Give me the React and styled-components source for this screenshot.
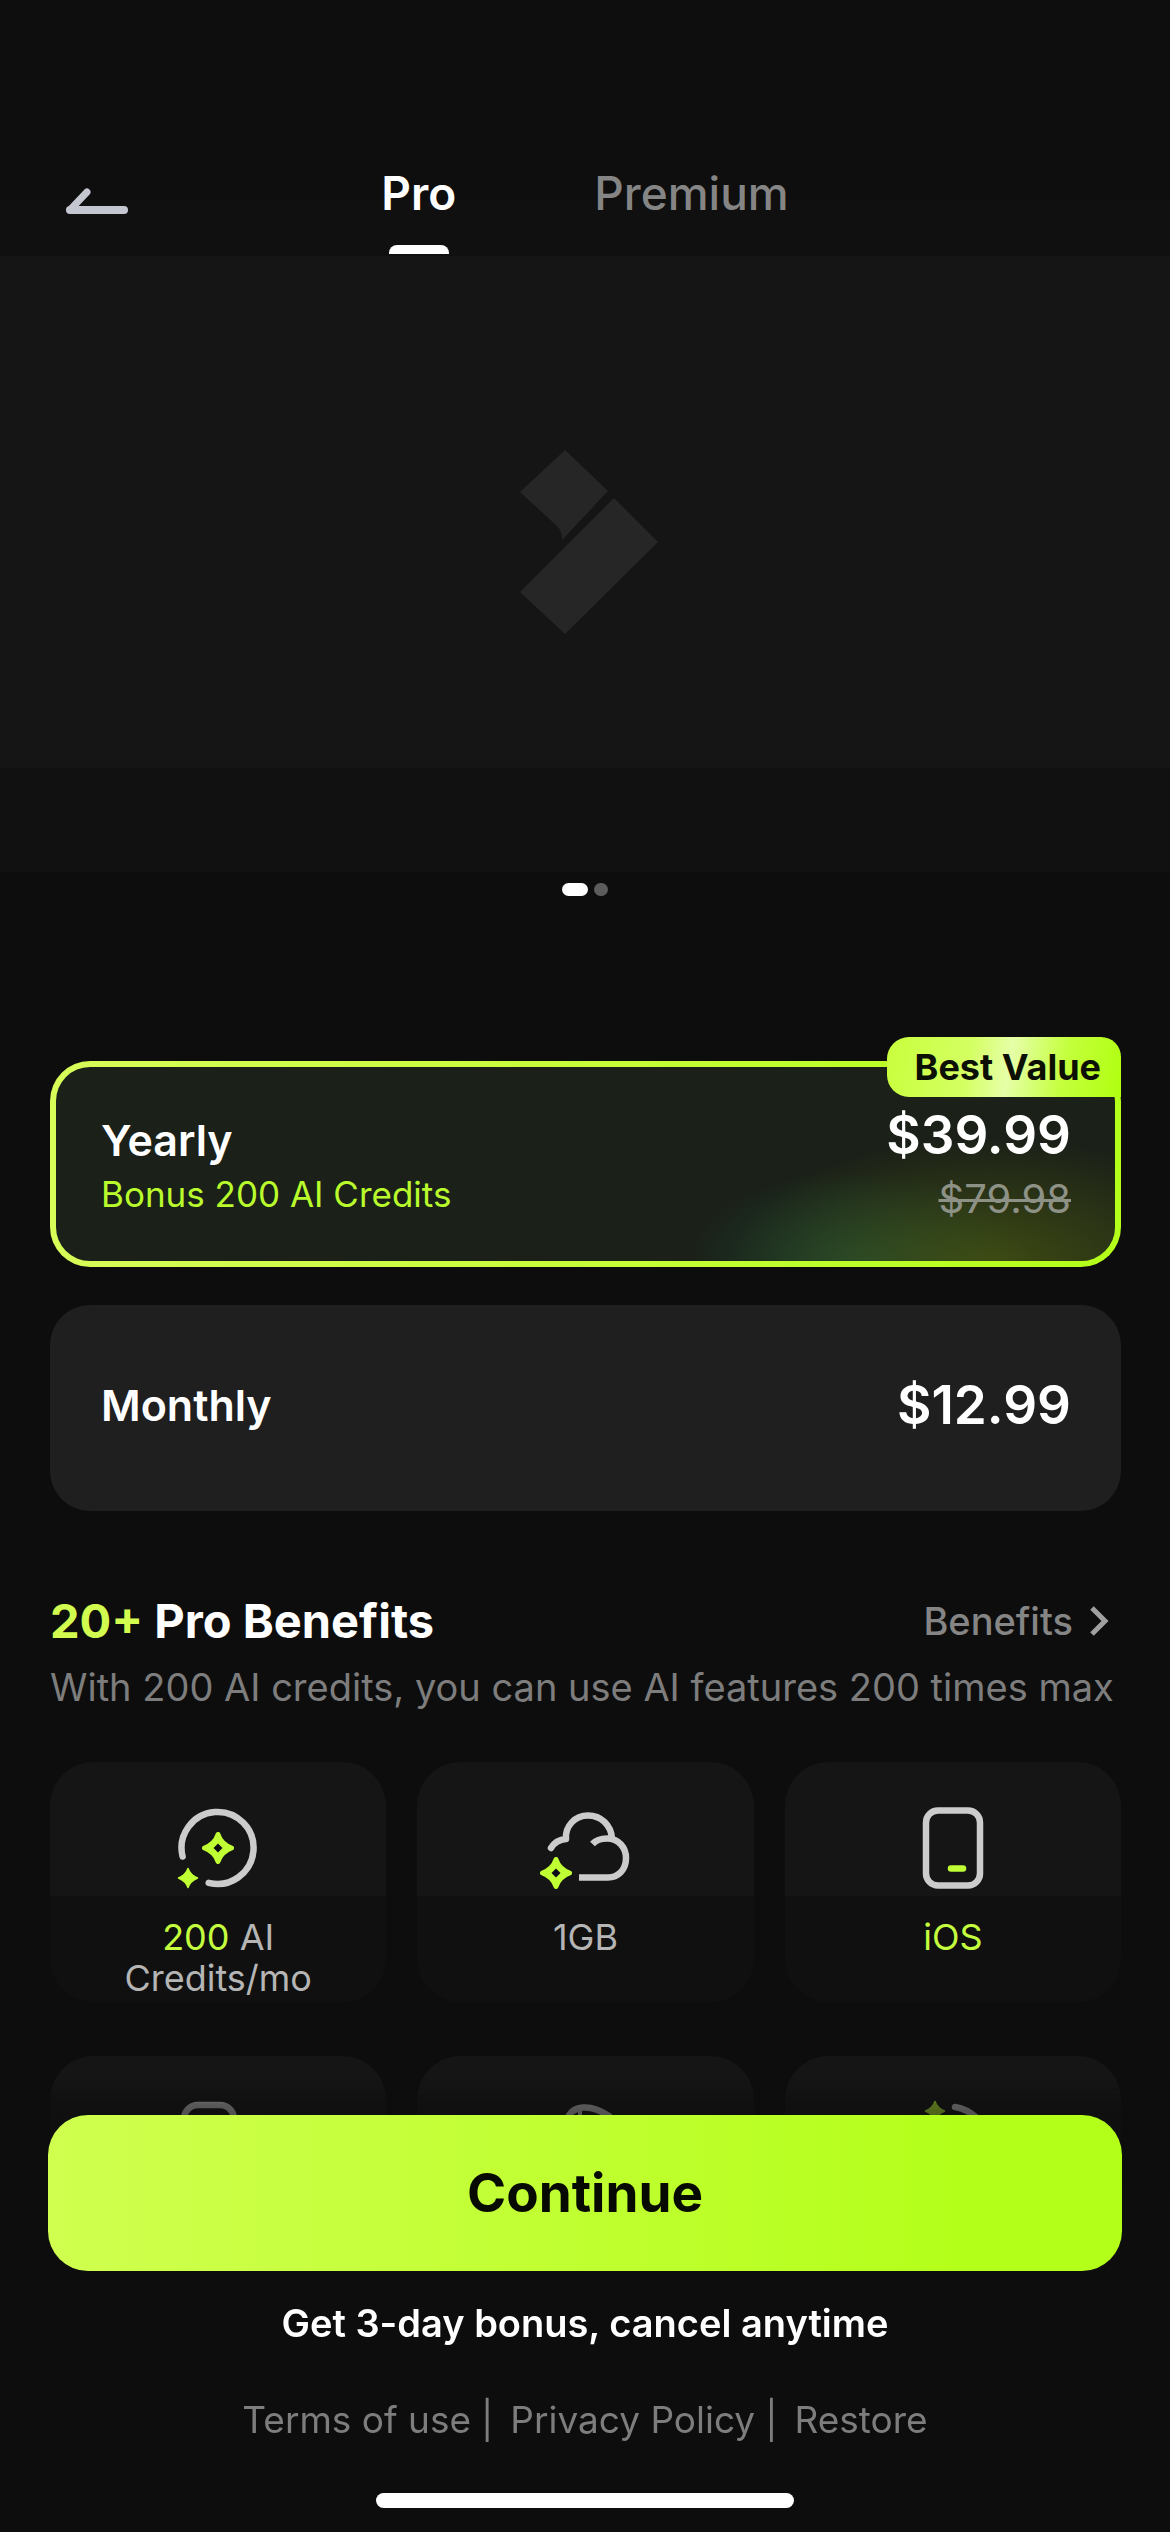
import React, { useState } from 'react'
import styled, { createGlobalStyle } from 'styled-components'

const GlobalStyle = createGlobalStyle`
  * {
    box-sizing: border-box;
  }
  body {
    margin: 0;
    background: #0d0d0d;
    color: #fff;
    font-family: Inter, "Liberation Sans", sans-serif;
  }
  button {
    border: 0;
    padding: 0;
    background: none;
    color: inherit;
    font: inherit;
    cursor: pointer;
  }
  svg {
    display: block;
  }
`

const Page = styled.div`
  display: flex;
  flex-direction: column;
  min-height: 100vh;
`

const Header = styled.header`
  display: grid;
  grid-template-columns: 1fr auto 1fr;
  align-items: start;
  padding: 166px 64px 2px;
  background: linear-gradient(#0e0e0e 200px, #101010 200px);
`

const BackButton = styled.button`
  justify-self: start;
  padding-top: 21px;
`

const Tabs = styled.div`
  display: flex;
  gap: 138px;
`

const Tab = styled.button`
  display: flex;
  flex-direction: column;
  align-items: center;
  gap: 25px;
  font-size: 46px;
  line-height: 54px;
  font-weight: ${({ $active }) => ($active ? 600 : 500)};
  color: ${({ $active }) => ($active ? '#fff' : '#858585')};

  &::after {
    content: "";
    width: 60px;
    height: 9px;
    border-radius: 8px 8px 0 0;
    background: ${({ $active }) => ($active ? '#fff' : 'transparent')};
  }
`

const Hero = styled.section`
  display: flex;
  justify-content: center;
  padding: 194px 0 134px;
  background: #151515;
`

const HeroShade = styled.div`
  height: 104px;
  background: #111;
`

const Dots = styled.div`
  display: flex;
  justify-content: center;
  gap: 6px;
  padding-top: 11px;
`

const Dot = styled.span`
  width: ${({ $active }) => ($active ? 26 : 14)}px;
  height: 13px;
  border-radius: 7px;
  background: ${({ $active }) => ($active ? '#fff' : '#5c5c5c')};
`

const Plans = styled.section`
  display: flex;
  flex-direction: column;
  gap: 38px;
  padding: 165px 49px 0 50px;
`

const PlanCard = styled.button`
  position: relative;
  display: flex;
  align-items: center;
  justify-content: space-between;
  height: 206px;
  padding: ${({ $active }) => ($active ? '6px 44px 0 45px' : '0 44px 6px 45px')};
  border: 6px solid transparent;
  border-radius: 40px;
  background: ${({ $active }) =>
    $active
      ? `radial-gradient(ellipse 260px 130px at 88% 104%, #4b5a10c0, transparent) padding-box,
         radial-gradient(ellipse 170px 90px at 76% 100%, #1a5a4490, transparent) padding-box,
         linear-gradient(#1b2118, #1b2118) padding-box,
         linear-gradient(90deg, #d8fc58, #b4ff1a) border-box`
      : '#1f1f1f border-box'};
`

const PlanText = styled.span`
  display: flex;
  flex-direction: column;
  align-items: ${({ $end }) => ($end ? 'flex-end' : 'flex-start')};
`

const PlanName = styled.span`
  font-size: 43px;
  line-height: 54px;
  font-weight: 600;
`

const PlanNote = styled.span`
  font-size: 35px;
  line-height: 54px;
  color: #b9fb2c;
`

const Price = styled.span`
  font-size: 53px;
  line-height: 64px;
  font-weight: 600;
`

const OldPrice = styled.s`
  font-size: 40px;
  line-height: 64px;
  color: #8d9186;
  text-decoration-thickness: 3px;
`

const Badge = styled.span`
  position: absolute;
  top: -30px;
  right: -6px;
  padding: 0 20px 0 28px;
  border-radius: 22px 20px 0 22px;
  font-size: 36px;
  line-height: 60px;
  font-weight: 700;
  color: #0c1004;
  background: linear-gradient(100deg, #c8ff3c 0%, #d4ff62 35%, #e6ffa8 52%, #c4ff3c 75%, #b0ff10 100%);
`

const Benefits = styled.section`
  padding: 82px 49px 0 50px;
`

const BenefitsHead = styled.div`
  display: flex;
  align-items: center;
  justify-content: space-between;
`

const Title = styled.h2`
  margin: 0;
  font-size: 47px;
  line-height: 56px;
  font-weight: 700;
`

const Lime = styled.span`
  color: ${({ $deep }) => ($deep ? '#c4fc3e' : '#d2fb50')};
`

const MoreLink = styled.a`
  display: flex;
  align-items: center;
  gap: 16px;
  padding-right: 12px;
  font-size: 38px;
  line-height: 48px;
  font-weight: 500;
  color: #858585;
  text-decoration: none;
`

const Subtitle = styled.p`
  margin: 14px 0 0;
  font-size: 38px;
  line-height: 48px;
  color: #7d7d7d;
`

const Grid = styled.div`
  display: grid;
  grid-template-columns: repeat(3, 1fr);
  gap: 54px 31px;
  margin-top: 51px;
`

const Benefit = styled.div`
  display: flex;
  flex-direction: column;
  align-items: center;
  gap: 21px;
  min-height: 240px;
  padding-top: 38px;
  border-radius: 44px;
  background: linear-gradient(#151515 56%, #101010 56%);
  font-size: 36px;
  line-height: 41px;
  text-align: center;
  color: #b5b5b5;
`

const Footer = styled.footer`
  position: fixed;
  left: 0;
  right: 0;
  bottom: 0;
  display: flex;
  flex-direction: column;
  align-items: center;
  padding: 35px 48px 24px;
  background: linear-gradient(#0d0d0d00 0, #0d0d0d99 24px, #0d0d0d 110px);
`

const Continue = styled.button`
  width: 100%;
  border-radius: 40px;
  background: linear-gradient(90deg, #d0ff4f, #b4ff1a 85%);
  font-size: 53px;
  line-height: 156px;
  font-weight: 700;
  color: #060a00;
`

const Offer = styled.p`
  margin: 30px 0 0;
  font-size: 38px;
  line-height: 44px;
  font-weight: 600;
`

const Legal = styled.nav`
  display: flex;
  margin-top: 53px;
  font-size: 37px;
  line-height: 44px;
  color: #7d7d7d;
`

const LegalLink = styled.a`
  color: inherit;
  text-decoration: none;

  & + &::before {
    content: "|";
    margin: 0 17px 0 10px;
  }
`

const HomeBar = styled.div`
  width: 39%;
  height: 15px;
  margin-top: 51px;
  border-radius: 8px;
  background: #fff;
`

const LIME = '#c0ff33'
const GREY = '#cccccc'

// four pointed star around the origin, r = half of its width
function Spark({ x, y, r, hollow }) {
  const k = r * 0.32
  const d = `M0 ${-r}Q${k * 0.7} ${-k * 0.7 - 1} ${r} 0Q${k * 0.7} ${k * 0.7 + 1} 0 ${r}Q${-k * 0.7} ${k * 0.7 + 1} ${-r} 0Q${-k * 0.7} ${-k * 0.7 - 1} 0 ${-r}Z`
  return (
    <g transform={`translate(${x} ${y})`}>
      <path d={d} fill={LIME} stroke={LIME} strokeWidth={hollow ? 5 : 1.5} strokeLinejoin="round" />
      {hollow && <path d="M0 -4.500L4.500 0L0 4.500L-4.500 0Z" fill="#0c0c18" stroke="none" />}
    </g>
  )
}

function Icon({ children }) {
  return (
    <svg width="96" height="96" viewBox="0 0 96 96" fill="none" stroke={GREY} strokeWidth="6.5" aria-hidden="true">
      {children}
    </svg>
  )
}

const CreditsIcon = () => (
  <Icon>
    <path d="M12.6 56.5A36 36 0 1 1 38.7 82.8" strokeLinecap="round" />
    <Spark x={48} y={48} r={13.5} hollow />
    <Spark x={18} y={78} r={9.5} />
  </Icon>
)

const CloudIcon = () => (
  <Icon>
    <path d="M14 48C17 43 22 39.500 29 39C28 26 38 15.500 51 15.500C64 15.500 74 25 75 38.500" strokeLinecap="round" strokeLinejoin="round" />
    <path d="M55.500 44C60 39 65 38.500 70 38.500C82 38.500 89 48 89 58C89 70 81 77.500 71 77.500H42" strokeLinejoin="round" />
    <Spark x={19} y={73} r={13.5} hollow />
  </Icon>
)

const PhoneIcon = () => (
  <Icon>
    <rect x="21" y="10.500" width="54" height="75" rx="12" />
    <path d="M46 68.500H58" stroke={LIME} strokeLinecap="round" />
  </Icon>
)

const DeviceIcon = () => (
  <Icon>
    <rect x="14" y="11" width="50" height="74" rx="14" />
  </Icon>
)

const PaletteIcon = () => (
  <Icon>
    <path d="M30 26C35 10 54 10 72 22C92 40 84 80 50 82" strokeLinecap="round" />
    <path d="M43 14V26" strokeWidth="4" />
  </Icon>
)

const MagicIcon = () => (
  <Icon>
    <Spark x={30} y={17} r={9.5} />
    <path d="M50 13Q62 15 72 24A36 36 0 0 1 48 84" strokeLinecap="round" />
  </Icon>
)

const benefits = [
  { icon: <CreditsIcon />, label: <><Lime $deep>200</Lime> AI<br />Credits/mo</> },
  { icon: <CloudIcon />, label: '1GB' },
  { icon: <PhoneIcon />, label: <Lime $deep>iOS</Lime> },
  { icon: <DeviceIcon /> },
  { icon: <PaletteIcon /> },
  { icon: <MagicIcon /> },
]

function App() {
  const [tab, setTab] = useState('Pro')
  const [plan, setPlan] = useState('yearly')

  return (
    <>
      <GlobalStyle />
      <Page>
        <Header>
          <BackButton aria-label="Back">
            <svg width="66" height="28" viewBox="0 0 66 28" fill="none" stroke="#c4c7d0" strokeLinecap="round" strokeLinejoin="round">
              <path d="M23 5L6 23" strokeWidth="7" />
              <path d="M6 23H60" strokeWidth="8" />
            </svg>
          </BackButton>
          <Tabs role="tablist">
            {['Pro', 'Premium'].map((name) => (
              <Tab key={name} role="tab" aria-selected={tab === name} $active={tab === name} onClick={() => setTab(name)}>
                {name}
              </Tab>
            ))}
          </Tabs>
        </Header>

        <Hero>
          <svg width="146" height="184" viewBox="0 0 146 184" fill="#262626" aria-hidden="true">
            <path d="M53 0L96 41L50 90C50 84 49 80 45 76L8 42Z" />
            <path d="M102 48L146 92L53 184L8 142Z" />
          </svg>
        </Hero>
        <HeroShade />
        <Dots>
          <Dot $active />
          <Dot />
        </Dots>

        <Plans>
          <PlanCard $active={plan === 'yearly'} aria-pressed={plan === 'yearly'} onClick={() => setPlan('yearly')}>
            <PlanText>
              <PlanName>Yearly</PlanName>
              <PlanNote>Bonus 200 AI Credits</PlanNote>
            </PlanText>
            <PlanText $end>
              <Price>$39.99</Price>
              <OldPrice>$79.98</OldPrice>
            </PlanText>
            <Badge>Best Value</Badge>
          </PlanCard>
          <PlanCard $active={plan === 'monthly'} aria-pressed={plan === 'monthly'} onClick={() => setPlan('monthly')}>
            <PlanName>Monthly</PlanName>
            <Price>$12.99</Price>
          </PlanCard>
        </Plans>

        <Benefits>
          <BenefitsHead>
            <Title><Lime>20+</Lime> Pro Benefits</Title>
            <MoreLink href="#benefits">
              Benefits
              <svg width="20" height="30" viewBox="0 0 20 30" fill="none" stroke="#a0a0a0" strokeWidth="5">
                <path d="M3 2L16 15L3 28" />
              </svg>
            </MoreLink>
          </BenefitsHead>
          <Subtitle>With 200 AI credits, you can use AI features 200 times max</Subtitle>
          <Grid id="benefits">
            {benefits.map((b, i) => (
              <Benefit key={i}>
                {b.icon}
                {b.label && <div>{b.label}</div>}
              </Benefit>
            ))}
          </Grid>
        </Benefits>

        <Footer>
          <Continue>Continue</Continue>
          <Offer>Get 3-day bonus, cancel anytime</Offer>
          <Legal>
            <LegalLink href="#terms">Terms of use</LegalLink>
            <LegalLink href="#privacy">Privacy Policy</LegalLink>
            <LegalLink href="#restore">Restore</LegalLink>
          </Legal>
          <HomeBar />
        </Footer>
      </Page>
    </>
  )
}

export default App
